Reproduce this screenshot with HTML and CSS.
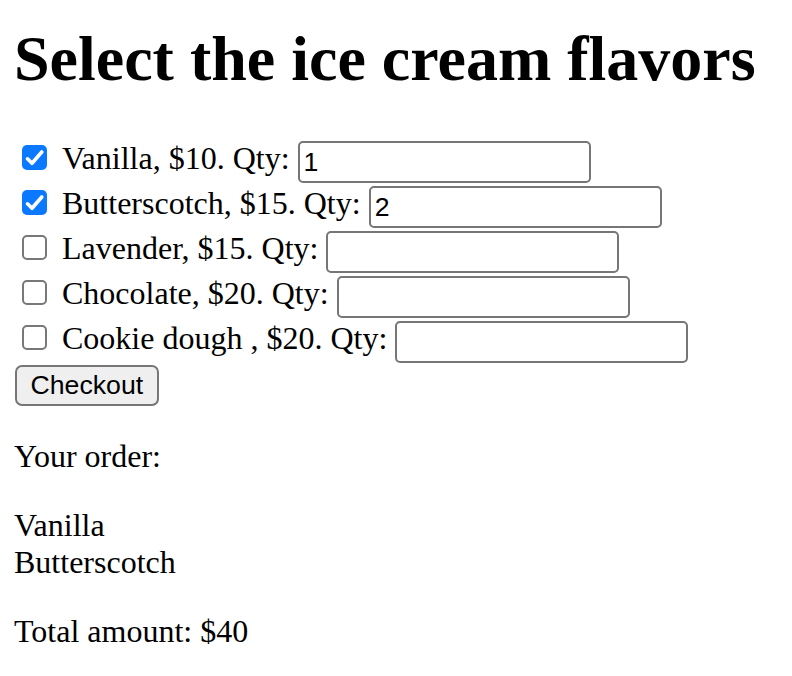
FILE: index.html
```html
<!DOCTYPE html>
<html>
<head>
<meta charset="utf-8">
<link rel="stylesheet" href="styles.css">
</head>
<body>
<h1 class="title">Select the ice cream flavors</h1>
<form class="flavors">
  <div class="row">
    <span class="box checked"><svg width="25" height="25" viewBox="0 0 25 25"><polyline points="5.5,13.8 10,18.3 19.8,7" fill="none" stroke="#fff" stroke-width="3.6" stroke-linecap="round" stroke-linejoin="round"/></svg></span>
    <span class="label">Vanilla, $10. Qty:</span>
    <input class="qty" type="text" value="1">
  </div>
  <div class="row">
    <span class="box checked"><svg width="25" height="25" viewBox="0 0 25 25"><polyline points="5.5,13.8 10,18.3 19.8,7" fill="none" stroke="#fff" stroke-width="3.6" stroke-linecap="round" stroke-linejoin="round"/></svg></span>
    <span class="label">Butterscotch, $15. Qty:</span>
    <input class="qty" type="text" value="2">
  </div>
  <div class="row">
    <span class="box"></span>
    <span class="label">Lavender, $15. Qty:</span>
    <input class="qty" type="text" value="">
  </div>
  <div class="row">
    <span class="box"></span>
    <span class="label">Chocolate, $20. Qty:</span>
    <input class="qty" type="text" value="">
  </div>
  <div class="row">
    <span class="box"></span>
    <span class="label">Cookie dough , $20. Qty:</span>
    <input class="qty" type="text" value="">
  </div>
  <button class="checkout" type="button">Checkout</button>
</form>
<div class="order">
  <p class="para">Your order:</p>
  <p class="para">Vanilla<br>Butterscotch</p>
  <p class="para">Total amount: $40</p>
</div>
</body>
</html>
```
FILE: styles.css
```css
html, body {
  background: #fff;
}
body {
  margin: 0 0 0 14px;
  font-family: "Liberation Serif", "Times New Roman", serif;
  font-size: 32px;
  color: #000;
}
.title {
  font-size: 64px;
  font-weight: bold;
  margin: 22px 0 43px;
  line-height: normal;
}
.flavors {
  margin: 0;
}
.row {
  display: flex;
  align-items: flex-start;
  height: 45px;
}
.box {
  box-sizing: border-box;
  width: 25px;
  height: 25px;
  margin: 5.5px 15px 0 8px;
  border: 2px solid #787878;
  border-radius: 5px;
  background: #fff;
  flex: none;
  position: relative;
}
.box.checked {
  border: none;
  background: #0b79ff;
}
.box svg {
  display: block;
}
.label {
  margin-top: 0.8px;
  white-space: pre;
}
.qty {
  box-sizing: border-box;
  width: 293px;
  height: 42px;
  margin: 2px 0 0 8px;
  padding: 0 4px;
  border: 2px solid #767676;
  border-radius: 5px;
  font-family: "Liberation Sans", Arial, sans-serif;
  font-size: 26.67px;
  color: #000;
  background: #fff;
  outline: none;
}
.checkout {
  display: block;
  box-sizing: border-box;
  height: 41px;
  margin: 1px 0 0 0.5px;
  padding: 0 14px;
  border: 2px solid #767676;
  border-radius: 7px;
  background: #efefef;
  font-family: "Liberation Sans", Arial, sans-serif;
  font-size: 26.67px;
  color: #000;
}
.order {
  margin-top: 32px;
}
.para {
  margin: 0 0 32px;
}
```
